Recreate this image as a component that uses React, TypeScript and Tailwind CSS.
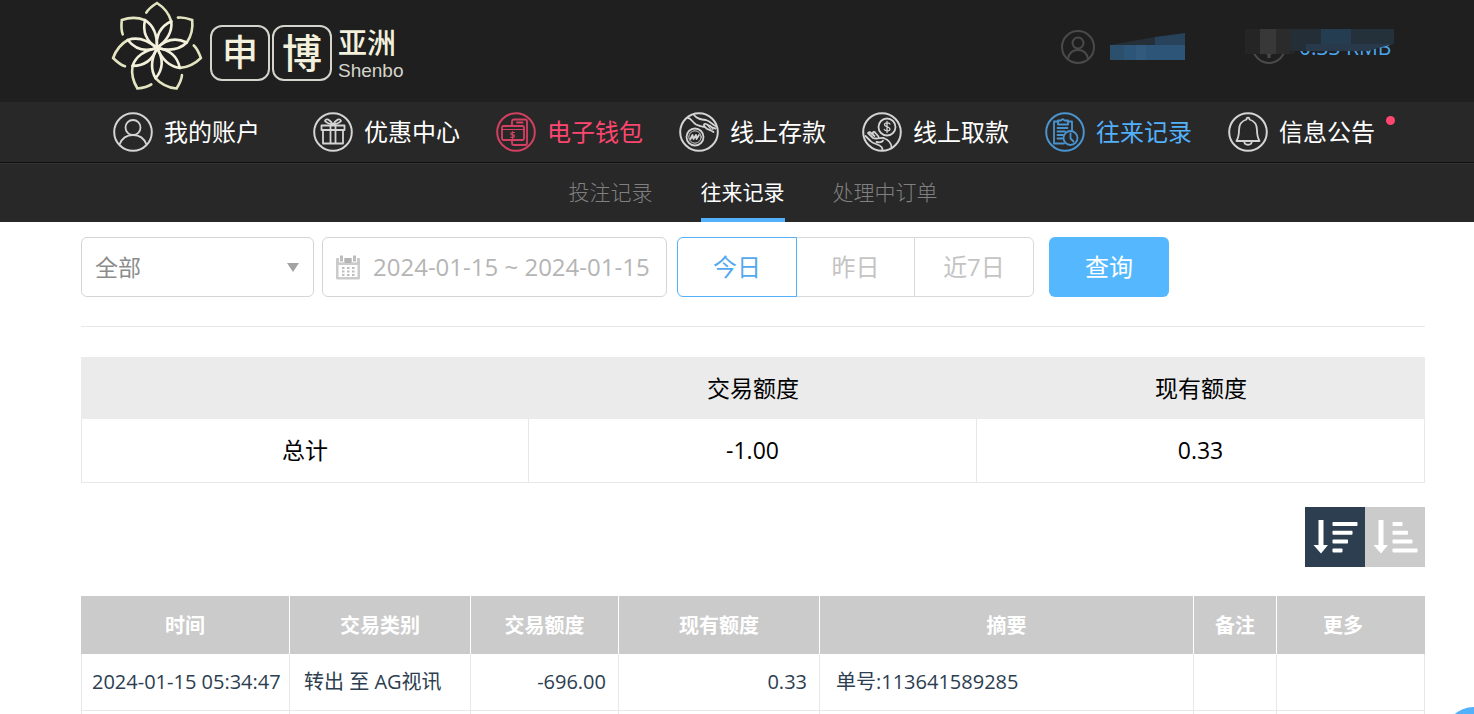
import React, { useState } from 'react';
import clsx from 'clsx';

interface NavItem {
  label: string;
  icon: React.ReactNode;
  color: string;
  badge?: boolean;
}

const Ring: React.FC<{ children: React.ReactNode }> = ({ children }) => (
  <svg
    viewBox="0 0 40 40"
    className="w-10 h-10 shrink-0"
    fill="none"
    stroke="currentColor"
    strokeWidth="1.8"
    strokeLinecap="round"
    strokeLinejoin="round"
    aria-hidden="true"
  >
    <circle cx="20" cy="20" r="18.8" strokeWidth="2" />
    {children}
  </svg>
);

const UserIcon = () => (
  <Ring>
    <circle cx="20" cy="15.500" r="7.500" />
    <path d="M6.500 32.500C9 26 14 23 20 23S31 26 33.500 32.500" />
  </Ring>
);

const GiftIcon = () => (
  <Ring>
    <path d="M8.500 13.500h23v4.500h-23zM10 18v13.500h20V18M17.500 13.500v18M22.500 13.500v18" />
    <path d="M20 13c-3-1-6.500-2-8-4 1-3 5-2 8 4zM20 13c3-1 6.500-2 8-4-1-3-5-2-8 4z" />
  </Ring>
);

const WalletIcon = () => (
  <Ring>
    <path d="M16 13V9.500q0-2 2-2h11q2 0 2 2v21.500q0 2-2 2H18q-2 0-2-2v-2.500M21 10.500h5.500" />
    <rect x="6" y="14" width="22" height="14" rx="1.500" />
    <path d="M6 17.500h22M18.500 20.500h-2.500q-1.200 0-1.200 1.200t1.200 1.200h1.300q1.200 0 1.200 1.200t-1.200 1.200h-2.500M16.700 19.500v7" strokeWidth="1.200" />
  </Ring>
);

const DepositIcon = () => (
  <Ring>
    <circle cx="16" cy="25" r="8.500" />
    <circle cx="16" cy="25" r="6.200" strokeWidth="1" />
    <path d="M11.500 27l2-4 1 4 2.500-4 .5 4 2.500-4" />
    <path d="M9 6c3 0 4 4 8 6.500 4 2 6 2 9 2.500-2-2-1-3.500 1-3 3 1 6 4 9.500 4.500M15 3c3 4 7 4.500 12 5 4 1 7 5 9.500 6M26 15c2 3 6 3 8.500 5" />
    <path d="M28 12.500l4 5M31 13.500l3 4" strokeWidth="1.200" />
  </Ring>
);

const WithdrawIcon = () => (
  <Ring>
    <circle cx="25" cy="15" r="8.500" />
    <path d="M28 12c-1-1.500-5.500-1.800-5.500.7s5.500 1.800 5.500 4.300-4.500 2.500-5.800.5M25 9.500v11" strokeWidth="1.300" />
    <path d="M3.500 24l5 5c3 3.500 8 2.500 11 6 1 1.500 1 2.500 1 3M6 21l5 5c3 1.500 8-.5 10.500 0 4 1.500 8 4 8 9.500M7 22c-1-2 1-2.500 2-1l3.500 3M11 21.500c-.5-2 1.500-2 2.500-.5l3 3.500M14.500 30c3 .5 6 0 6.500-1.500" />
  </Ring>
);

const RecordsIcon = () => (
  <Ring>
    <path d="M13.500 9.500H9v22h10M22.500 9.500H27V18M13 8.500h3q1.500-2.500 3.500 0h3.500v4H13z" />
    <path d="M12.500 16h10M12.500 19.500h7.500M12.500 23h5.500M12.500 26.500h5" />
    <circle cx="25.500" cy="26" r="7" />
    <path d="M25.500 21.500V26.500l3 3" />
  </Ring>
);

const BellIcon = () => (
  <Ring>
    <path d="M18.500 7.500c0-2.500 3-2.500 3 0 5 1.500 7.500 5 7.500 10.500 0 5 1 8.500 2.500 11h-23c1.500-2.500 2.500-6 2.500-11 0-5.500 2.500-9 7.500-10.500z" />
    <path d="M16 29c.5 5 7.500 5 8 0" />
  </Ring>
);

const navItems: NavItem[] = [
  { label: '我的账户', icon: <UserIcon />, color: 'text-white mr-[17px]' },
  { label: '优惠中心', icon: <GiftIcon />, color: 'text-white' },
  { label: '电子钱包', icon: <WalletIcon />, color: 'text-[#ff4670]' },
  { label: '线上存款', icon: <DepositIcon />, color: 'text-white' },
  { label: '线上取款', icon: <WithdrawIcon />, color: 'text-white' },
  { label: '往来记录', icon: <RecordsIcon />, color: 'text-[#53b0fb]' },
  { label: '信息公告', icon: <BellIcon />, color: 'text-white', badge: true },
];

const tabs = ['投注记录', '往来记录', '处理中订单'];
const ranges = ['今日', '昨日', '近7日'];
const petals = [0, 1, 2, 3, 4, 5, 6];

const Logo = () => (
  <a href="#" className="flex items-start text-[#f3f0dc]" aria-label="申博亚洲 Shenbo">
    <svg viewBox="-46 -47 92 92" className="w-[92px] h-[92px]" fill="none" stroke="currentColor" strokeWidth="2.600" strokeLinecap="round">
      {petals.map((i) => (
        <g key={i} transform={`rotate(${(i * 360) / 7})`}>
          <path stroke="#e3e4c0" d="M-10.700-35.300Q-8-40 0-45Q11-38 14.300-26.700" />
          <path d="M14.300-26.700Q16-12 0 0M14.300-26.700Q-2-19 0 0" />
        </g>
      ))}
    </svg>
    <span className="mt-6 ml-[7px] flex h-14 w-[60px] items-center justify-center rounded-xl border-2 border-[#d4d4cc] text-4xl font-medium">申</span>
    <span className="mt-6 ml-0.5 flex h-14 w-[60px] items-center justify-center rounded-xl border-2 border-[#d4d4cc] text-[40px] font-medium">博</span>
    <span className="mt-6 ml-1.5 flex flex-col">
      <span className="h-9 text-[29px] leading-9 font-medium">亚洲</span>
      <span className="text-[19px] leading-5 text-[#d5d5cc] font-['Liberation_Sans',sans-serif]">Shenbo</span>
    </span>
  </a>
);

const AccountInfo = () => (
  <div className="flex items-center text-[#4a4a4a]">
    <svg viewBox="0 0 36 36" className="w-9 h-9" fill="none" stroke="currentColor" strokeWidth="2">
      <circle cx="18" cy="18" r="16" />
      <circle cx="18" cy="14" r="5.500" />
      <path d="M8 30c1-6 5-9 10-9s9 3 10 9" />
    </svg>
    <svg viewBox="0 0 75 28" className="ml-3.5 w-[75px] h-7">
      <path d="M0 12L45 4v9H0z" fill="#252f37" />
      <path d="M45 4L75 0v13H45z" fill="#27425a" />
      <path d="M0 12h75v15H0z" fill="#2d5578" />
      <path d="M0 12h14v15H0z" fill="#2c4f6c" />
      <path d="M26 12h10v15H26z" fill="#315a7c" />
    </svg>
    <div className="relative ml-[60px] flex w-[150px] items-center">
      <svg viewBox="0 0 36 36" className="ml-1.5 w-9 h-9" fill="none" stroke="currentColor" strokeWidth="2">
        <circle cx="18" cy="18" r="16" />
        <path d="M15 24h6M18 24v5" strokeWidth="3" />
      </svg>
      <span className="ml-3 text-[21px] leading-10 whitespace-nowrap text-[#4aa5ee]">0.33 RMB</span>
      <svg viewBox="0 0 149 26" className="absolute left-0 top-0.5 w-[149px] h-[26px]">
        <path d="M0 0h50v25H0z" fill="#252525" />
        <path d="M15 0h16v25H15z" fill="#383838" />
        <path d="M31 0h14v25H31z" fill="#2b2b2b" />
        <path d="M45 0h61v22H45z" fill="#242e37" />
        <path d="M76 0h30v15H76z" fill="#253d51" />
        <path d="M106 0h43v15h-43z" fill="#25313a" />
        <path d="M61 15h88l-12 3-14 4H61z" fill="#27394a" />
      </svg>
    </div>
  </div>
);

const SortIcon: React.FC<{ widths: number[] }> = ({ widths }) => (
  <svg viewBox="0 0 60 60" className="w-[60px] h-[60px]" fill="currentColor" aria-hidden="true">
    <path d="M13.500 13h5v25H23l-7 8.500L8.500 38h5z" />
    {widths.map((width, i) => (
      <rect key={i} x="27.500" y={15 + i * 8.8} width={width} height="4" rx=".8" />
    ))}
  </svg>
);

export default function App() {
  const [activeTab, setActiveTab] = useState('往来记录');
  const [range, setRange] = useState('今日');
  const [descending, setDescending] = useState(true);
  const [dates, setDates] = useState('2024-01-15 ~ 2024-01-15');

  return (
    <div className="h-screen overflow-hidden bg-white font-['Open_Sans','Noto_Sans_CJK_SC',sans-serif]">
      <header>
        <div className="flex h-[102px] items-center justify-between bg-[#1f1f1f] pb-2 pl-[111px] pr-[79px]">
          <Logo />
          <AccountInfo />
        </div>
        <nav className="flex h-[61px] items-center gap-9 border-b border-[#111] bg-[#282828] pl-[113px]">
          {navItems.map((item) => (
            <a
              key={item.label}
              href="#"
              className={clsx('relative flex items-center gap-[11px] text-2xl whitespace-nowrap', item.color)}
            >
              <span className="opacity-80">{item.icon}</span>
              {item.label}
              {item.badge && <span className="absolute -right-5 top-1 h-[9px] w-[9px] rounded-full bg-[#ff4670]" />}
            </a>
          ))}
        </nav>
        <div className="flex h-[59px] justify-center gap-12 border-t border-[#333] bg-[#282828] pl-[81px] pr-[49px]">
          {tabs.map((tab) => (
            <button
              key={tab}
              onClick={() => setActiveTab(tab)}
              className={clsx(
                'border-b-4 pt-1 text-[21px]',
                activeTab === tab ? 'border-[#53b0fb] text-white' : 'border-transparent text-[#808080] font-light'
              )}
            >
              {tab}
            </button>
          ))}
        </div>
      </header>

      <main className="pl-[81px] pr-[49px] pt-[15px]">
        <form className="flex border-b border-[#e8e8e8] pb-[29px] text-2xl" onSubmit={(e) => e.preventDefault()}>
          <div className="relative">
            <select
              aria-label="交易类别"
              className="h-[60px] w-[233px] appearance-none rounded-md border border-[#d5d5d5] bg-white pl-[13px] text-[23px] text-[#8c8c8c]"
            >
              <option>全部</option>
            </select>
            <svg viewBox="0 0 12 10" className="pointer-events-none absolute right-[15px] top-[26px] h-2.5 w-3" fill="#a3a3a3">
              <path d="M0 0h12L6 9z" />
            </svg>
          </div>
          <label className="ml-2 flex h-[60px] w-[345px] items-center rounded-md border border-[#d5d5d5] pl-3">
            <svg viewBox="0 0 26 26" className="h-[26px] w-[26px] shrink-0" aria-hidden="true">
              <path d="M2 4h22q1 0 1 1v19q0 1.500-1.500 1.500h-21Q1 25.500 1 24V5q0-1 1-1z" fill="#cbcbcb" />
              <path d="M3.500 11h19v12h-19z" fill="#fff" />
              <path d="M4.500 1h4v7h-4zM17.500 1h4v7h-4z" fill="#bdbdbd" stroke="#fff" />
              <path d="M10 4h6v5h-6z" fill="#b5b5b5" />
              <path d="M7 14h12.500M7 17.500h12.500M7 21h12.500" stroke="#bdbdbd" strokeWidth="2" strokeDasharray="2.500 2.500" />
            </svg>
            <input
              aria-label="日期"
              value={dates}
              onChange={(e) => setDates(e.target.value)}
              className="ml-3 min-w-0 flex-1 bg-transparent text-[#b5b5b5] outline-none"
            />
          </label>
          <div className="ml-2.5 flex">
            {ranges.map((item) => (
              <button
                key={item}
                type="button"
                onClick={() => setRange(item)}
                className={clsx(
                  'h-[60px] w-[120px] -mr-px border first:rounded-l-md even:w-[119px] last:mr-0 last:rounded-r-md',
                  range === item ? 'relative border-[#53b0fb] text-[#53a8ee]' : 'border-[#d9d9d9] text-[#c4c4c4]'
                )}
              >
                {item}
              </button>
            ))}
          </div>
          <button type="submit" className="ml-[15px] h-[60px] w-[120px] rounded-md bg-[#55b8ff] text-white">
            查询
          </button>
        </form>

        <table className="mt-[30px] w-full table-fixed border-separate border-spacing-0 text-center text-[23px] text-black">
          <thead>
            <tr className="h-[62px] bg-[#ebebeb]">
              <th />
              <th className="font-normal">交易额度</th>
              <th className="font-normal">现有额度</th>
            </tr>
          </thead>
          <tbody className="[&_td]:border-b [&_td]:border-r [&_td]:border-[#e8e8e8]">
            <tr className="h-16">
              <td className="border-l">总计</td>
              <td>-1.00</td>
              <td>0.33</td>
            </tr>
          </tbody>
        </table>

        <div className="mt-6 flex justify-end text-white">
          <button
            aria-label="降序"
            onClick={() => setDescending(true)}
            className={descending ? 'bg-[#2e3e51]' : 'bg-[#cbcbcb]'}
          >
            <SortIcon widths={[25, 20, 15.5, 10]} />
          </button>
          <button
            aria-label="升序"
            onClick={() => setDescending(false)}
            className={descending ? 'bg-[#cbcbcb]' : 'bg-[#2e3e51]'}
          >
            <SortIcon widths={[10, 15.5, 20, 25]} />
          </button>
        </div>

        <table className="mt-[29px] w-full table-fixed border-separate border-spacing-0 text-xl whitespace-nowrap text-[#2c3e50]">
          <colgroup>
            <col className="w-[209px]" />
            <col className="w-[181px]" />
            <col className="w-[148px]" />
            <col className="w-[201px]" />
            <col className="w-[374px]" />
            <col className="w-[83px]" />
            <col className="w-[148px]" />
          </colgroup>
          <thead>
            <tr className="h-[58px] bg-[#cbcbcb] text-white">
              {['时间', '交易类别', '交易额度', '现有额度', '摘要', '备注', '更多'].map((title) => (
                <th key={title} className="border-r border-white pt-0.5 font-bold last:border-r-0 last:pr-4">
                  {title}
                </th>
              ))}
            </tr>
          </thead>
          <tbody className="[&_td]:border-b [&_td]:border-r [&_td]:border-[#e8e8e8] [&_td:first-child]:border-l">
            <tr className="h-[57px]">
              <td className="pl-2.5">2024-01-15 05:34:47</td>
              <td className="pl-3.5">转出 至 AG视讯</td>
              <td className="pr-3 text-right">-696.00</td>
              <td className="pr-3 text-right">0.33</td>
              <td className="pl-4">单号:113641589285</td>
              <td />
              <td />
            </tr>
            <tr className="h-[57px]">
              <td /><td /><td /><td /><td /><td /><td />
            </tr>
          </tbody>
        </table>
      </main>
      <button aria-label="客服" className="fixed -bottom-[53px] -right-[30px] h-[60px] w-[60px] rounded-full bg-[#53b0fb]" />
    </div>
  );
}
